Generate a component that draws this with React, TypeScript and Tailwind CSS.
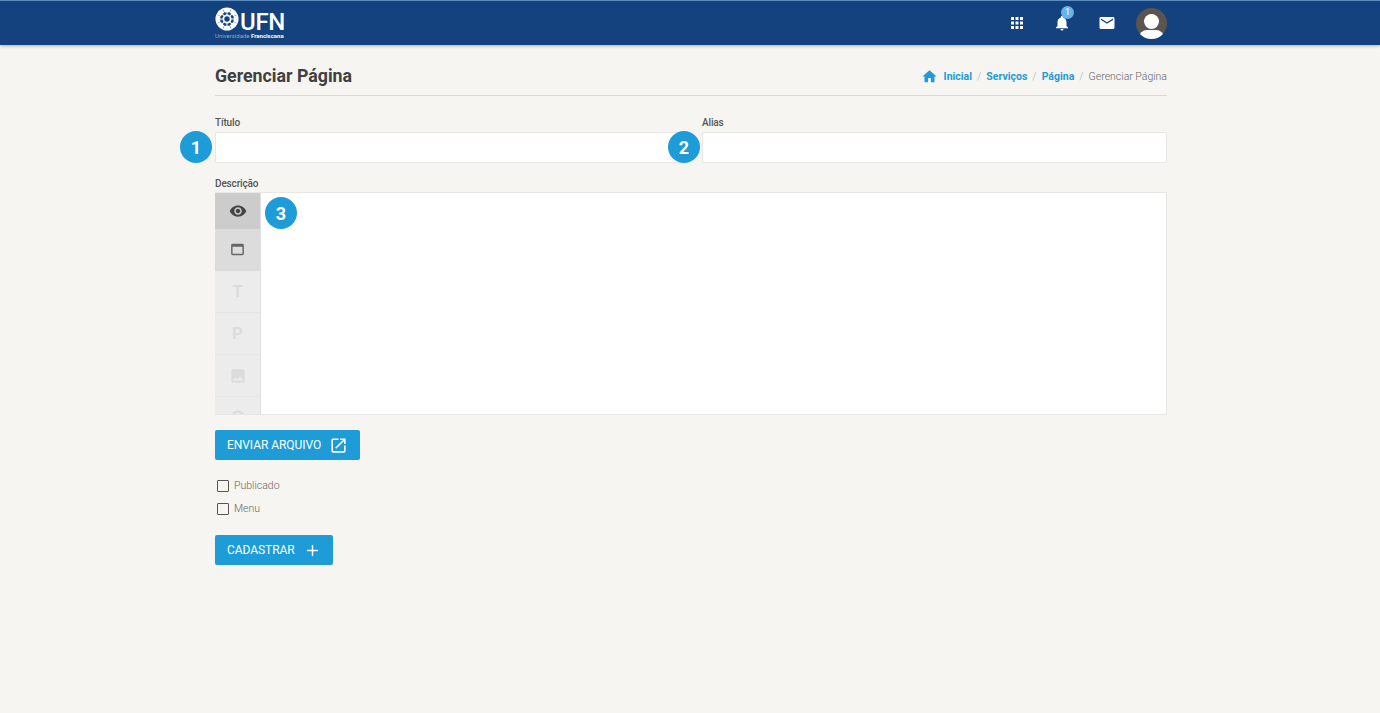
import { Plus } from "lucide-react"
import { MdHome, MdNotifications, MdEmail, MdApps, MdImage, MdOutlineWebAsset, MdOpenInNew, MdHelp, MdVisibility } from "react-icons/md"

const PETALAS = [0, 45, 90, 135, 180, 225, 270, 315]

function Logo() {
  return (
    <div className="flex w-[71px] flex-col">
      <div className="flex h-[24px] items-end">
        <svg width="24" height="24" viewBox="0 0 24 24" className="shrink-0">
          {PETALAS.map(function (a) {
            return (
              <g key={a} transform={"rotate(" + a + " 12 12)"}>
                <path d="M7.6 1.3 Q12 -0.4 16.4 1.3 L14.4 5.6 Q12 4.8 9.6 5.6 Z" fill="#ffffff" />
                <line x1="12" y1="4.5" x2="12" y2="8" stroke="#ffffff" strokeWidth="1" />
              </g>
            )
          })}
          <circle cx="12" cy="12" r="3.6" fill="none" stroke="#ffffff" strokeWidth="1.8" />
        </svg>
        <span className="ml-[1px] h-[17px] text-[24px] leading-[17px] font-medium tracking-[-0.3px] text-white">UFN</span>
      </div>
      <span className="mt-[2px] text-[6px] leading-none whitespace-nowrap text-[#8fa9cc]">
        Universidade <b className="font-bold text-white">Franciscana</b>
      </span>
    </div>
  )
}

function Badge({ n, className }: { n: number; className: string }) {
  return (
    <span className={"absolute flex h-8 w-8 items-center justify-center rounded-full bg-[#1d9cd8] text-[18px] font-bold text-white " + className}>
      {n}
    </span>
  )
}

function Campo({ label, n, badge }: { label: string; n: number; badge: string }) {
  return (
    <div className="relative">
      <label className="block text-[10px] leading-[12px] font-medium tracking-[-0.15px] text-[#555555]">{label}</label>
      <input className="mt-[3px] block h-[31px] w-full rounded-[2px] border border-[#e9e7e3] bg-white" />
      <Badge n={n} className={badge} />
    </div>
  )
}

function ItemLateral({ children, className }: { children: React.ReactNode; className: string }) {
  return <div className={"flex shrink-0 items-center justify-center " + className}>{children}</div>
}

function Check({ label }: { label: string }) {
  return (
    <label className="flex h-[23px] items-center gap-[5px] pl-[2px]">
      <span className="h-[12px] w-[12px] rounded-[1px] border-[1.5px] border-[#5a5550]" />
      <span className="text-[10.5px] font-light text-[#666666]">{label}</span>
    </label>
  )
}

export default function App() {
  return (
    <div className="min-h-[713px] bg-[#f6f5f2] font-['Roboto',sans-serif]">
      <header className="h-[45px] border-t border-[#5d8cc0] bg-[#14427f] shadow-[0_1px_3px_rgba(0,0,0,0.3)]">
        <div className="ml-[215px] flex h-full w-[952px] items-center justify-between">
          <Logo />
          <div className="flex items-center text-white">
            <MdApps size={18} className="mr-[27px]" />
            <div className="relative mr-[27px]">
              <MdNotifications size={18} />
              <span className="absolute -top-[8px] left-[8px] flex h-[13px] w-[13px] items-center justify-center rounded-full bg-[#64b5e8] text-[9px] leading-none text-white">1</span>
            </div>
            <MdEmail size={18} className="mr-[20px]" />
            <div className="relative h-[31px] w-[31px] overflow-hidden rounded-full bg-[#5a5550]">
              <span className="absolute top-[6px] left-[8px] h-[15px] w-[15px] rounded-full bg-white" />
              <span className="absolute top-[22px] left-[3px] h-[16px] w-[25px] rounded-full bg-white" />
            </div>
          </div>
        </div>
      </header>

      <main className="ml-[215px] w-[952px]">
        <div className="flex h-[51px] items-center justify-between border-b border-[#dcdad6] pt-[13px]">
          <h1 className="text-[17.75px] font-bold text-[#404040]">Gerenciar Página</h1>
          <nav className="flex items-center gap-[5px] text-[10.5px] text-[#c4c4c4]">
            <MdHome size={17} className="mr-[1px] text-[#1d9cd8]" />
            <a className="font-bold text-[#1d9cd8]">Inicial</a>
            <span>/</span>
            <a className="font-bold text-[#1d9cd8]">Serviços</a>
            <span>/</span>
            <a className="font-bold text-[#1d9cd8]">Página</a>
            <span>/</span>
            <span className="font-light text-[#666666]">Gerenciar Página</span>
          </nav>
        </div>

        <div className="mt-[21px] grid grid-cols-2 gap-x-[22px]">
          <Campo label="Título" n={1} badge="top-[14px] -left-[35px]" />
          <Campo label="Alias" n={2} badge="top-[14px] -left-[34px]" />
        </div>

        <div className="relative mt-[15px]">
          <label className="block text-[10px] leading-[12px] font-medium tracking-[-0.15px] text-[#555555]">Descrição</label>
          <div className="mt-[2px] flex h-[223px] overflow-hidden border-y border-r border-[#e9e7e3] bg-white">
            <div className="flex w-[46px] shrink-0 flex-col overflow-hidden border-r border-[#e0e0e0] bg-[#ececec]">
              <ItemLateral className="h-[36px] bg-[#cccccc]">
                <MdVisibility size={18} className="text-[#444444]" />
              </ItemLateral>
              <ItemLateral className="h-[42px] pb-[2px] bg-[#dcdcdc]">
                <MdOutlineWebAsset size={17} className="text-[#666666]" />
              </ItemLateral>
              <ItemLateral className="h-[42px] border-b border-[#e6e6e6] text-[17px] font-bold text-[#dcdcdc]">T</ItemLateral>
              <ItemLateral className="h-[42px] border-b border-[#e6e6e6] text-[17px] font-bold text-[#dcdcdc]">P</ItemLateral>
              <ItemLateral className="h-[42px] border-b border-[#e6e6e6]">
                <MdImage size={18} className="text-[#dcdcdc]" />
              </ItemLateral>
              <ItemLateral className="h-[42px]">
                <MdHelp size={18} className="text-[#dcdcdc]" />
              </ItemLateral>
            </div>
          </div>
          <Badge n={3} className="top-[19px] left-[50px]" />
        </div>

        <button className="mt-[15px] flex h-[30px] w-[145px] items-center rounded-[2px] bg-[#1d9cd8] pl-[12px] text-[12px] tracking-[-0.05px] text-white">
          ENVIAR ARQUIVO
          <MdOpenInNew size={19} className="ml-[8px]" />
        </button>

        <div className="mt-[14px] flex flex-col">
          <Check label="Publicado" />
          <Check label="Menu" />
        </div>

        <button className="mt-[15px] flex h-[30px] w-[118px] items-center rounded-[2px] bg-[#1d9cd8] pl-[12px] text-[12px] tracking-[-0.05px] text-white">
          CADASTRAR
          <Plus size={17} className="ml-[9px]" />
        </button>
      </main>
    </div>
  )
}
